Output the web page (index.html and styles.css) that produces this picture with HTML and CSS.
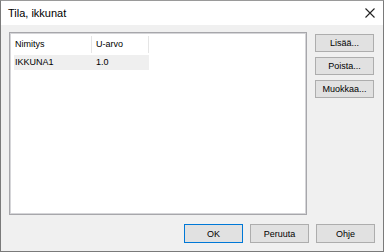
FILE: index.html
```
<!DOCTYPE html>
<html lang="fi">
<head>
  <meta charset="UTF-8">
  <title>Tila, ikkunat</title>
  <link rel="stylesheet" href="styles.css">
</head>
<body>
<div class="dialog">
  <div class="titlebar">
    <span class="title">Tila, ikkunat</span>
    <span class="close">
      <svg width="10" height="10" viewBox="0 0 10 10"><path d="M0.5 0.5 L9.5 9.5 M9.5 0.5 L0.5 9.5" stroke="#222" stroke-width="1.1" fill="none"/></svg>
    </span>
  </div>
  <div class="content">
    <div class="main">
      <div class="list">
        <div class="list-head">
          <div class="col col-name">Nimitys</div>
          <div class="col col-value">U-arvo</div>
        </div>
        <div class="list-row">
          <div class="col col-name">IKKUNA1</div>
          <div class="col col-value">1.0</div>
        </div>
      </div>
      <div class="side">
        <button class="btn">Lisää...</button>
        <button class="btn">Poista...</button>
        <button class="btn">Muokkaa...</button>
      </div>
    </div>
    <div class="footer">
      <button class="btn btn-default">OK</button>
      <button class="btn">Peruuta</button>
      <button class="btn">Ohje</button>
    </div>
  </div>
</div>
</body>
</html>
```

FILE: styles.css
```
* {
  margin: 0;
  padding: 0;
  box-sizing: border-box;
}

body {
  font-family: "Liberation Sans", Arial, sans-serif;
  font-size: 9px;
  color: #000;
  background: #fff;
}

.dialog {
  width: 384px;
  height: 252px;
  border: 1px solid #7a7a7a;
  border-top-color: #9a9a9a;
  background: #f0f0f0;
  display: flex;
  flex-direction: column;
}

.titlebar {
  height: 24px;
  background: #fff;
  display: flex;
  align-items: center;
  justify-content: space-between;
  padding: 0 7px 0 7px;
}

.title {
  font-size: 11px;
}

.close {
  display: flex;
  width: 10px;
  height: 10px;
  margin-right: 1px;
}

.content {
  flex: 1;
  display: flex;
  flex-direction: column;
  padding: 7px 8px 8px 8px;
}

.main {
  display: flex;
  gap: 8px;
}

.list {
  width: 298px;
  height: 183px;
  background: #fff;
  border: 1px solid #a7a7ab;
  box-shadow: inset 1px 1px 0 #d5d5d8, inset -1px -1px 0 #d5d5d8;
  padding: 1px 0 0 4px;
}

.list-head,
.list-row {
  display: flex;
}

.list-head {
  height: 20px;
  align-items: center;
}

.list-head .col {
  border-right: 1px solid #e5e5e5;
  height: 17px;
  line-height: 17px;
}

.list-row {
  width: 135px;
  height: 15px;
  line-height: 15px;
  background: #efefef;
  margin-top: 1px;
}

.col {
  padding-left: 1px;
}

.col-name {
  width: 78px;
}

.col-value {
  width: 57px;
  padding-left: 4px;
}

.side {
  display: flex;
  flex-direction: column;
  gap: 5px;
  padding-top: 2px;
}

.btn {
  width: 59px;
  height: 18px;
  font-family: inherit;
  font-size: 9px;
  color: #000;
  background: #e1e1e1;
  border: 1px solid #adadad;
}

.btn-default {
  border-color: #0078d7;
}

.footer {
  margin-top: auto;
  display: flex;
  justify-content: flex-end;
  gap: 7px;
}

.footer .btn {
  height: 19px;
}
```
